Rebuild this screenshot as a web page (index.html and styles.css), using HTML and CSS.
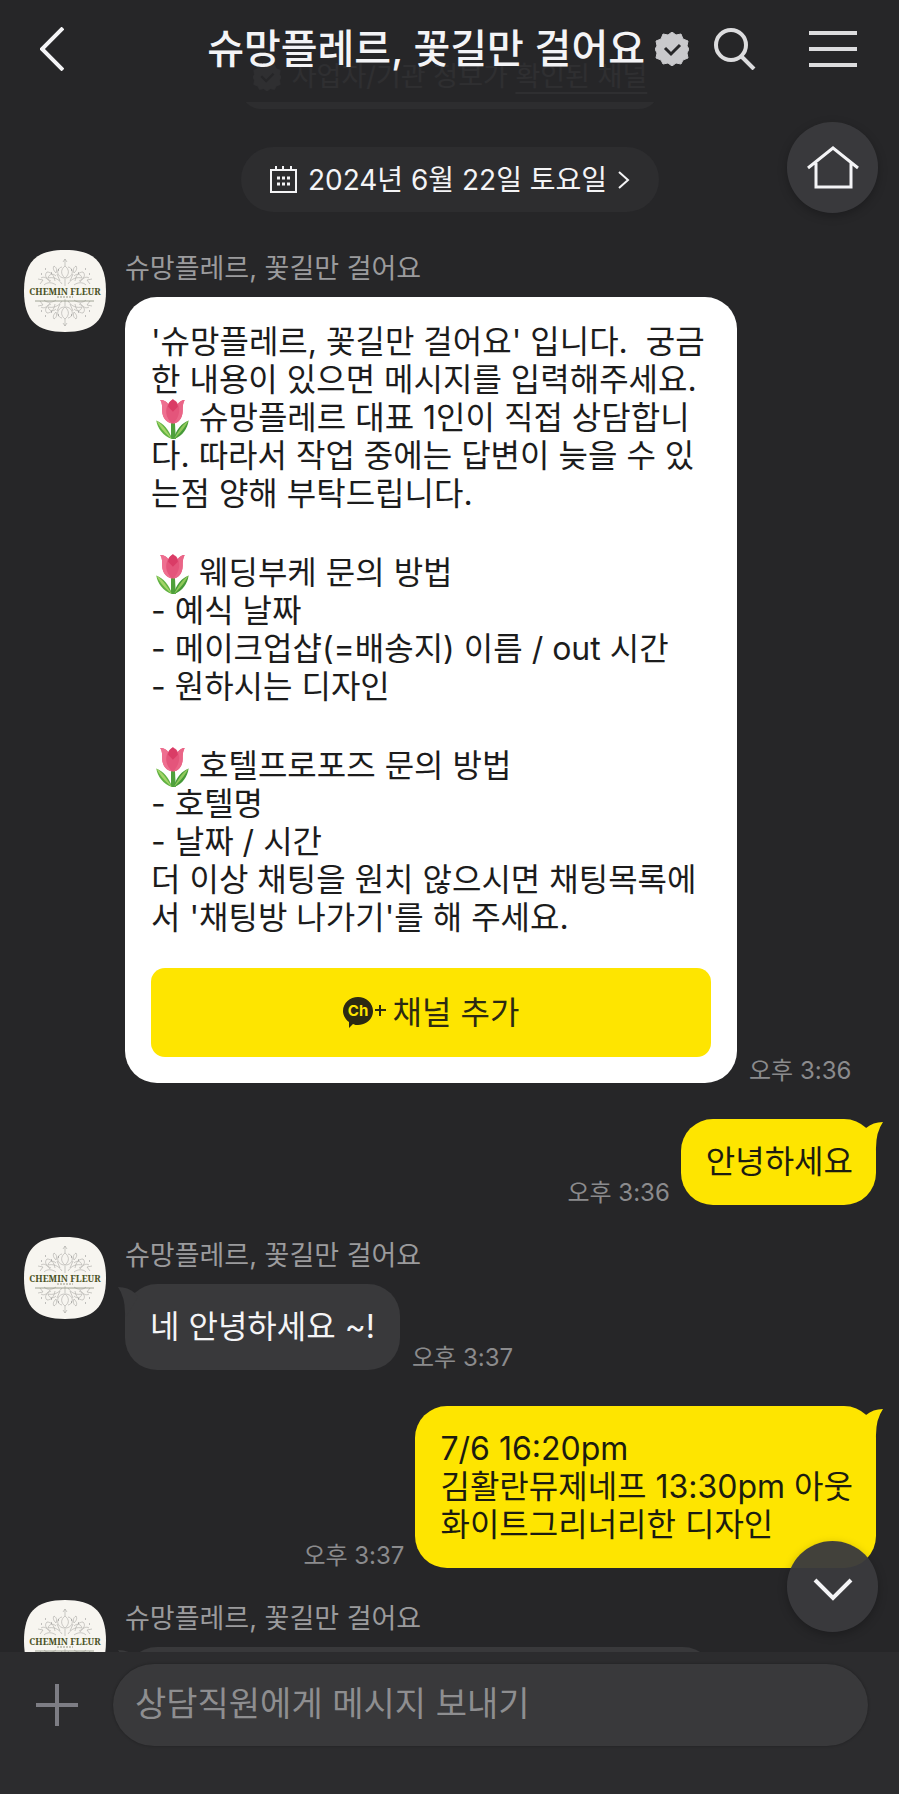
FILE: index.html
```html
<!DOCTYPE html>
<html lang="ko">

<head>
    <meta charset="UTF-8">
    <meta name="viewport" content="width=device-width, initial-scale=1.0">
    <title>슈망플레르, 꽃길만 걸어요</title>
    <link rel="stylesheet" href="styles.css">
</head>

<body>
    <!-- shared shapes -->
    <svg class="sprite" aria-hidden="true">
        <symbol id="tulip" viewBox="-1 0 39 43">
            <path d="M19 24h4l1 17h-5z" fill="#4fa03c" />
            <path d="M20 41C17 31 11 25 4 22c1 8 7 16 16 19z" fill="#5fb142" />
            <path d="M4 22c4 8 9 13 16 19-7-11-10-15-16-19z" fill="#a3d468" />
            <path d="M22 41c2-10 8-16 15-19-1 8-6 16-15 19z" fill="#469a38" />
            <path d="M37 22c-4 8-9 13-15 19 6-11 9-15 15-19z" fill="#8fc95a" />
            <path d="M8 1c4 0 7 2 8 4 2-3 4-4 5-4s4 1 5 4c2-2 4-4 7-4-2 4-2 7-2 11 0 8-5 13-10 13S10 20 10 12C10 8 10 4 8 1z" fill="#e4557b" />
            <path d="M16 5c-3 6-3 13 4 20-6-1-10-6-10-13 0-4 0-8-2-11 4 0 7 2 8 4z" fill="#ee6f90" />
            <path d="M21 0c-3 2-5 5-5 8l5 5 5-5c0-3-3-6-5-8z" fill="#da3c66" />
            <path d="M26 5c3 6 1 15-5 20 6 0 10-6 10-13 0-4 0-7 2-11-3 0-6 2-7 4z" fill="#ea6587" />
        </symbol>

        <symbol id="verified" viewBox="0 0 34 34">
            <path d="M17 0l4 3 5-1 2 5 5 2-1 5 2 3-2 4 1 5-5 2-2 4-5-1-4 3-4-3-5 1-2-4-5-2 1-5-2-4 2-3-1-5 5-2 2-5 5 1z" fill="currentColor" stroke="currentColor" stroke-linejoin="round" />
            <path class="tick" d="M10 16l6 6 9-9" fill="none" stroke-width="3" />
        </symbol>

        <symbol id="tail" viewBox="0 0 20 30">
            <path d="M3 6Q10 0 20 0Q13 10 13 26L12 30L0 10z" fill="currentColor" />
        </symbol>

        <symbol id="flower" viewBox="0 0 60 28">
            <g fill="none" stroke="#a9a8a4" stroke-width=".6">
                <path d="M30 1v7M28 4l2-3 2 3M30 8c-4 3-5 8 0 12 5-4 4-9 0-12zM27 9c-6 1-6 10 2 11M33 9c6 1 6 10-2 11M30 20v8" />
                <path d="M27 26c-4-6-9-7-14-6M13 20c1-4 5-5 8-2M12 14c4 0 7 3 8 9M12 14c-3 3-1 7 4 9M6 20c3-2 6 0 9 4M3 21l5 1-3 4M9 27c3-3 8-3 12 0M19 8c-2 3 1 6 2 7 1-3 1-5-2-7zM22 16l3 7" />
                <path d="M33 26c4-6 9-7 14-6M47 20c-1-4-5-5-8-2M48 14c-4 0-7 3-8 9M48 14c3 3 1 7-4 9M54 20c-3-2-6 0-9 4M57 21l-5 1 3 4M51 27c-3-3-8-3-12 0M41 8c2 3-1 6-2 7-1-3-1-5 2-7zM38 16l-3 7" />
            </g>
            <path d="M6 16h1M10 11h1M16 15h1M43 15h1M50 11h1M54 16h1M23 12h1M36 12h1" stroke="#888" />
        </symbol>

        <symbol id="logo" viewBox="0 0 82 82">
            <path d="M41 0C69 0 82 11 82 41S69 82 41 82 0 71 0 41 13 0 41 0z" fill="#f7f5f0" />
            <use href="#flower" x="11" y="8" width="60" height="28" />
            <use href="#flower" x="11" y="-77" width="60" height="28" transform="scale(1 -1)" />
            <text x="41" y="45" text-anchor="middle" class="logo-name">CHEMIN FLEUR</text>
            <path d="M33 47h16" stroke="#97998a" stroke-width="1" stroke-dasharray="2 1" />
            <path d="M11 51h59" stroke="#8c8f7d" stroke-width=".8" />
        </symbol>
    </svg>

    <header class="topbar">
        <button class="icon-button" aria-label="뒤로">
            <svg width="24" height="44" viewBox="0 0 24 44" fill="none" stroke="currentColor" stroke-width="4"><path d="M23 1L2 22l21 21" /></svg>
        </button>
        <h1 class="title">슈망플레르, 꽃길만 걸어요</h1>
        <svg class="title-badge"><use href="#verified" /></svg>
        <button class="icon-button search" aria-label="검색">
            <svg width="42" height="42" viewBox="0 0 42 42" fill="none" stroke="currentColor" stroke-width="4"><circle cx="17" cy="17" r="15" /><path d="M27 28l13 13" /></svg>
        </button>
        <button class="icon-button menu" aria-label="메뉴">
            <svg width="48" height="36" viewBox="0 0 48 36" stroke="currentColor" stroke-width="4"><path d="M0 2h48M0 18h48M0 34h48" /></svg>
        </button>
    </header>

    <main class="chat">
        <p class="pill notice">
            <svg class="notice-badge"><use href="#verified" /></svg>
            <span>사업자/기관 정보가 <a href="#">확인된 채널</a></span>
        </p>
        <button class="pill date">
            <svg width="27" height="27" viewBox="0 0 27 27" fill="none" stroke="currentColor" stroke-width="2">
                <path d="M1 4h25v22H1zM6 0v5M13 0v5M21 0v5" />
                <path d="M7 12h13M7 18h13" stroke-width="3" stroke-dasharray="3 2" />
            </svg>
            <span>2024년 6월 22일 토요일</span>
            <svg class="date-arrow" width="12" height="18" viewBox="0 0 12 18" fill="none" stroke="currentColor" stroke-width="2"><path d="M1 1l9 8-9 8" /></svg>
        </button>

        <section class="row">
            <svg class="avatar"><use href="#logo" /></svg>
            <div class="content">
                <h2 class="name">슈망플레르, 꽃길만 걸어요</h2>
                <div class="line">
                    <div class="card">
                        <p>'슈망플레르, 꽃길만 걸어요' 입니다.&nbsp; 궁금<br>
                            한 내용이 있으면 메시지를 입력해주세요.<br>
                            <svg class="emoji" role="img" aria-label="튤립"><use href="#tulip" /></svg> 슈망플레르 대표 1인이 직접 상담합니<br>
                            다. 따라서 작업 중에는 답변이 늦을 수 있<br>
                            는점 양해 부탁드립니다.</p>
                        <p><svg class="emoji" role="img" aria-label="튤립"><use href="#tulip" /></svg> 웨딩부케 문의 방법<br>
                            - 예식 날짜<br>
                            - 메이크업샵(=배송지) 이름 / out 시간<br>
                            - 원하시는 디자인</p>
                        <p><svg class="emoji" role="img" aria-label="튤립"><use href="#tulip" /></svg> 호텔프로포즈 문의 방법<br>
                            - 호텔명<br>
                            - 날짜 / 시간<br>
                            더 이상 채팅을 원치 않으시면 채팅목록에<br>
                            서 '채팅방 나가기'를 해 주세요.</p>
                        <button class="add-channel">
                            <svg width="43" height="32" viewBox="0 0 43 32">
                                <path d="M15 0c8 0 15 6 15 14s-7 14-15 14c-2 0-3 0-5-1l-4 4v-6C2 22 0 18 0 14 0 6 7 0 15 0z" fill="currentColor" />
                                <text x="15" y="19" text-anchor="middle" class="ch">Ch</text>
                                <path d="M32 13h11M37 8v11" stroke="currentColor" stroke-width="2" />
                            </svg>
                            채널 추가
                        </button>
                    </div>
                    <time class="time">오후 3:36</time>
                </div>
            </div>
        </section>

        <section class="row me">
            <time class="time">오후 3:36</time>
            <p class="bubble">안녕하세요<svg class="tail"><use href="#tail" /></svg></p>
        </section>

        <section class="row">
            <svg class="avatar"><use href="#logo" /></svg>
            <div class="content">
                <h2 class="name">슈망플레르, 꽃길만 걸어요</h2>
                <div class="line">
                    <p class="bubble">네 안녕하세요 ~!<svg class="tail"><use href="#tail" /></svg></p>
                    <time class="time">오후 3:37</time>
                </div>
            </div>
        </section>

        <section class="row me">
            <time class="time">오후 3:37</time>
            <p class="bubble">7/6 16:20pm<br>김활란뮤제네프 13:30pm 아웃<br>화이트그리너리한 디자인<svg class="tail"><use href="#tail" /></svg></p>
        </section>

        <section class="row">
            <svg class="avatar"><use href="#logo" /></svg>
            <div class="content">
                <h2 class="name">슈망플레르, 꽃길만 걸어요</h2>
                <div class="line">
                    <p class="bubble long">&nbsp;<svg class="tail"><use href="#tail" /></svg></p>
                </div>
            </div>
        </section>

        <button class="float home" aria-label="채널 홈">
            <svg width="52" height="44" viewBox="0 0 52 44" fill="none" stroke="currentColor" stroke-width="3"><path d="M1 22L26 2l25 20M9 17v24h35V17" /></svg>
        </button>
        <button class="float down" aria-label="맨 아래로">
            <svg width="40" height="24" viewBox="0 0 40 24" fill="none" stroke="currentColor" stroke-width="4"><path d="M2 2l18 18L38 2" /></svg>
        </button>
    </main>

    <form class="composer">
        <button type="button" class="icon-button plus" aria-label="추가">
            <svg width="42" height="42" viewBox="0 0 42 42" stroke="currentColor" stroke-width="4"><path d="M0 21h42M21 0v42" /></svg>
        </button>
        <input type="text" aria-label="메시지" placeholder="상담직원에게 메시지 보내기">
    </form>
</body>

</html>
```
FILE: styles.css
```css
* {
    box-sizing: border-box;
}

body {
    margin: 0;
    height: 100vh;
    display: flex;
    flex-direction: column;
    position: relative;
    overflow: hidden;
    background: #262628;
    color: #f4f4f6;
    font-family: Inter, "Noto Sans CJK KR", sans-serif;
    font-size: 32px;
    line-height: 38px;
}

h1,
h2,
p {
    margin: 0;
    font-weight: 400;
}

button,
input {
    font: inherit;
    color: inherit;
    border: 0;
    padding: 0;
    background: none;
}

button {
    cursor: pointer;
}

svg {
    flex-shrink: 0;
}

.sprite {
    display: none;
}

.icon-button {
    display: flex;
}

/* header floats over the scrolled messages */
.topbar {
    position: absolute;
    top: 0;
    left: 0;
    right: 0;
    z-index: 2;
    height: 102px;
    padding: 0 42px 4px 40px;
    display: flex;
    align-items: center;
    background: rgba(38, 38, 40, .92);

    .title {
        margin-left: auto;
        font-size: 40px;
        font-weight: 500;
        line-height: 48px;
        white-space: nowrap;
    }

    .search {
        margin-left: 25px;
        color: #dcdcde;
    }

    .menu {
        margin-left: 53px;
        color: #dcdcde;
    }
}

.title-badge {
    width: 34px;
    height: 34px;
    margin-left: 10px;
    color: #c9c9cc;
}

.tick {
    stroke: #262628;
}

.chat {
    flex: 1;
    min-height: 0;
    overflow: hidden;
    position: relative;
    display: flex;
    flex-direction: column;
    padding: 44px 23px 0 24px;
}

.pill {
    flex-shrink: 0;
    align-self: center;
    height: 65px;
    margin-bottom: 38px;
    padding: 0 29px;
    border-radius: 33px;
    display: flex;
    align-items: center;
    gap: 11px;
    background: #2d2d2f;
    font-size: 28px;
}

.notice {
    padding: 0 12px;
    border-radius: 20px;
    color: #9a9a9c;
    font-size: 27px;

    a {
        color: inherit;
        text-underline-offset: 6px;
    }
}

.notice-badge {
    width: 28px;
    height: 28px;
}

.row {
    flex-shrink: 0;
    display: flex;
    gap: 19px;

    &.me {
        justify-content: flex-end;
        align-items: flex-end;
        gap: 11px;
        margin: 36px 0 32px;
    }
}

.avatar {
    width: 82px;
    height: 82px;
}

.logo-name {
    font: bold 9px "Noto Serif", "Liberation Serif", serif;
    fill: #4a5225;
}

.content {
    flex: 1;
    min-width: 0;
}

.name {
    height: 47px;
    font-size: 27px;
    line-height: 38px;
    color: #9b9b9d;
}

.line {
    display: flex;
    align-items: flex-end;
    gap: 12px;
}

.time {
    font-size: 24px;
    line-height: 24px;
    color: #8b8b8d;
    white-space: nowrap;
}

.card {
    width: 612px;
    padding: 26px;
    border-radius: 32px;
    background: #fff;
    color: #1c1c1c;

    p {
        margin-bottom: 41px;
        white-space: nowrap;
    }

    p:last-of-type {
        margin-bottom: 31px;
    }
}

.emoji {
    width: 39px;
    height: 42px;
    margin: -8px 0;
    vertical-align: -4px;
}

.add-channel {
    width: 100%;
    height: 89px;
    border-radius: 14px;
    display: flex;
    justify-content: center;
    align-items: center;
    gap: 7px;
    background: #fee500;
    color: #2c2a12;
}

.ch {
    font: bold 15px Inter, sans-serif;
    fill: #fee500;
}

.bubble {
    position: relative;
    padding: 24px 25px;
    border-radius: 32px;
    background: #39393b;

    .me & {
        background: #fee500;
        color: #1c1c10;
        padding-right: 23px;
    }

    &.long {
        width: 590px;
    }
}

.tail {
    position: absolute;
    top: 3px;
    left: -7px;
    width: 20px;
    height: 30px;
    color: #39393b;
    transform: scaleX(-1);

    .me & {
        left: auto;
        right: -7px;
        color: #fee500;
        transform: none;
    }
}

.float {
    position: absolute;
    right: 21px;
    width: 91px;
    height: 91px;
    border-radius: 50%;
    display: flex;
    justify-content: center;
    align-items: center;
    background: rgba(58, 58, 61, .96);
    box-shadow: 0 3px 10px rgba(0, 0, 0, .25);
}

.home {
    top: 122px;
}

.down {
    bottom: 20px;
    padding-top: 6px;
}

.composer {
    flex-shrink: 0;
    display: flex;
    align-items: center;
    gap: 35px;
    padding: 12px 31px 48px 36px;
    background: #2c2c2e;

    .plus {
        color: #7d7d84;
    }

    input {
        flex: 1;
        min-width: 0;
        height: 82px;
        padding: 0 22px 4px;
        border-radius: 41px;
        background: #39393b;
        font-size: 34px;
        box-shadow: 0 0 3px rgba(0, 0, 0, .3);
    }

    input::placeholder {
        color: #8e8e90;
        opacity: 1;
    }
}
```
